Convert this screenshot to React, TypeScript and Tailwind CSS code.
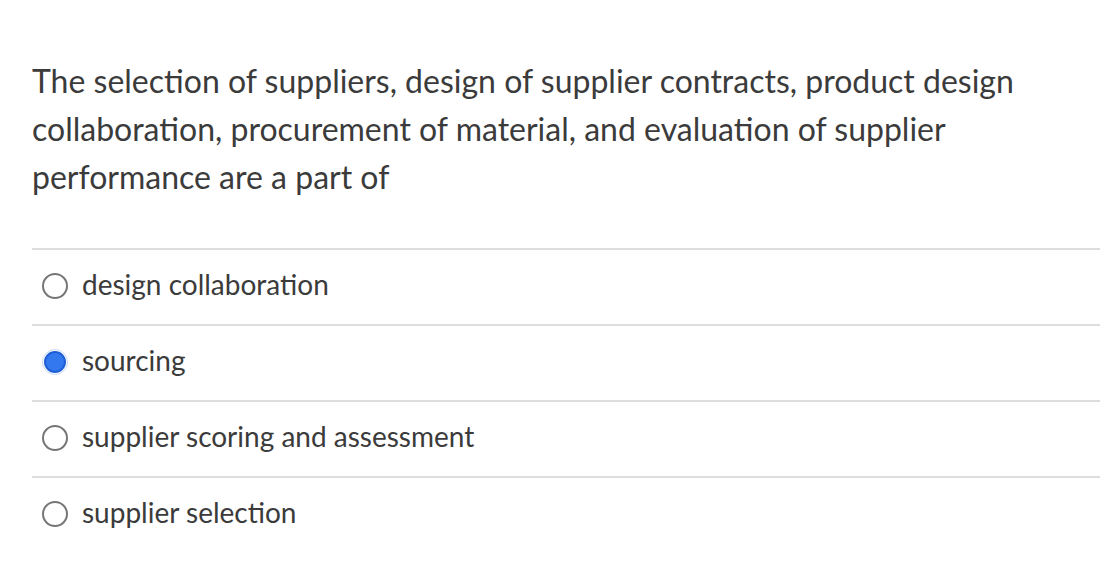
const OPTIONS = [
  { label: 'design collaboration', checked: false },
  { label: 'sourcing', checked: true },
  { label: 'supplier scoring and assessment', checked: false },
  { label: 'supplier selection', checked: false },
]

function Radio({ checked }: { checked: boolean }) {
  if (checked) {
    return (
      <span className="flex h-[26px] w-[26px] shrink-0 items-center justify-center rounded-full border border-[#c9d9f7] bg-white">
        <span className="h-[22px] w-[22px] rounded-full border-2 border-[#1f5fd6] bg-[#3478f0]" />
      </span>
    )
  }
  return <span className="h-[26px] w-[26px] shrink-0 rounded-full border-2 border-[#767676] bg-white" />
}

export default function App() {
  return (
    <div className="min-h-[582px] bg-white pl-[32px] pr-[14px] pt-[57px] font-['Lato','Open_Sans',sans-serif] text-[#3b3b3b]">
      <p className="mb-[47px] max-w-[1040px] text-[32px] leading-[48px]">
        The selection of suppliers, design of supplier contracts, product design collaboration,
        procurement of material, and evaluation of supplier performance are a part of
      </p>
      <div>
        {OPTIONS.map((o) => (
          <div key={o.label} className="flex h-[76px] items-center gap-[14px] border-t-2 border-[#dddddd] pb-[2px] pl-[10px]">
            <Radio checked={o.checked} />
            <span className="pb-[5px] text-[28px]">{o.label}</span>
          </div>
        ))}
      </div>
    </div>
  )
}
